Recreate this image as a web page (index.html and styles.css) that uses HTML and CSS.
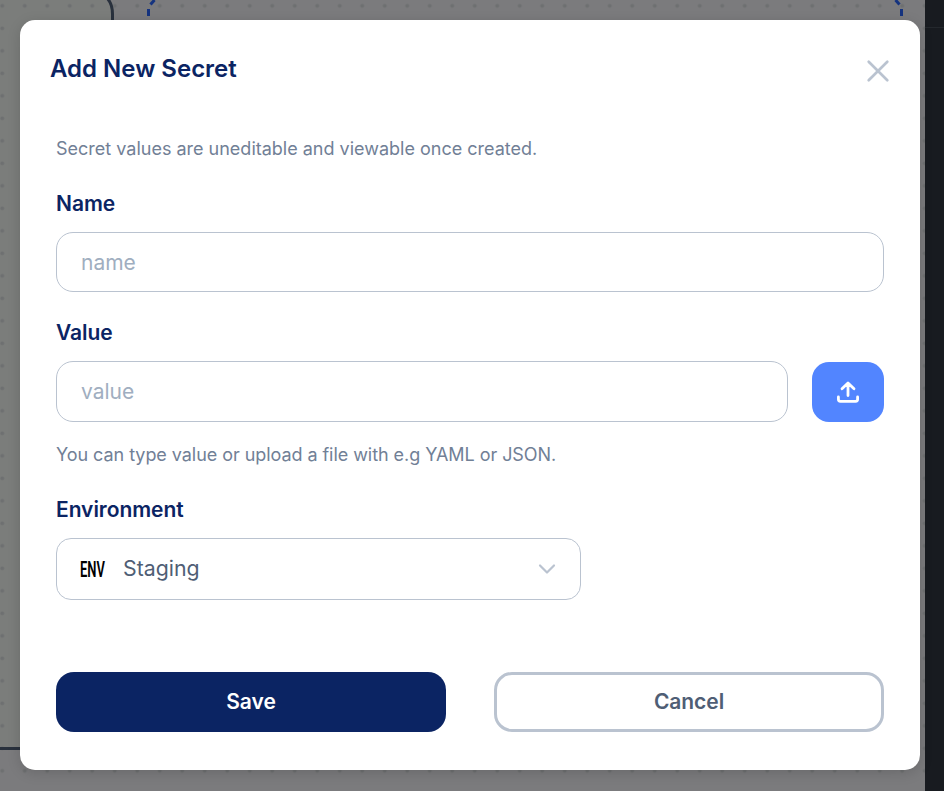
FILE: index.html
```
<!DOCTYPE html>
<html lang="en">
<head>
<meta charset="utf-8">
<title>Add New Secret</title>
<link rel="stylesheet" href="styles.css">
</head>
<body>
<svg class="canvas" width="944" height="791" aria-hidden="true">
  <defs>
    <pattern id="dots" width="22.5" height="22.5" patternUnits="userSpaceOnUse" x="-9" y="-5.4">
      <circle cx="11.25" cy="11.25" r="2" fill="#6e7071"/>
    </pattern>
  </defs>
  <rect width="944" height="791" fill="#7b7b7d"/>
  <path d="M0 0H106Q112 5 112 16V748H0Z" fill="#7b7d7b"/>
  <rect width="925" height="791" fill="url(#dots)"/>
  <path d="M106 -3Q112.500 3 112.500 14V748.500H0" fill="none" stroke="#29313d" stroke-width="3"/>
  <path d="M148.500 16V9M150.500 4.500L154.500 0M901.500 16V9M899.500 4.500L895.500 0" fill="none" stroke="#15337f" stroke-width="3"/>
  <rect x="925" width="19" height="791" fill="#181b20"/>
  <path d="M925 27.500H944" stroke="#24282d"/>
</svg>
<main class="modal" role="dialog" aria-labelledby="title">
  <header class="modal-header">
    <h1 id="title">Add New Secret</h1>
    <button class="close" aria-label="Close">
      <svg width="24" height="24" viewBox="0 0 24 24"><path d="M2.700 2.700L21.300 21.300M21.300 2.700L2.700 21.300"/></svg>
    </button>
  </header>
  <form class="form">
    <p class="note intro">Secret values are uneditable and viewable once created.</p>
    <label class="label" for="name">Name</label>
    <input class="input name-input" id="name" placeholder="name">
    <label class="label" for="value">Value</label>
    <div class="value-row">
      <input class="input" id="value" placeholder="value">
      <button class="upload" type="button" aria-label="Upload">
        <svg width="24" height="24" viewBox="0 0 24 24"><path d="M12 15.500V4M6 8.800L12 3L18 8.800M2.400 17V19.300Q2.400 21.300 4.400 21.300H19.600Q21.600 21.300 21.600 19.300V17"/></svg>
      </button>
    </div>
    <p class="note hint">You can type value or upload a file with e.g YAML or JSON.</p>
    <span class="label">Environment</span>
    <div class="select">
      <span class="env"><span>ENV</span></span>
      <span class="selected">Staging</span>
      <svg class="chevron" width="20" height="20" viewBox="0 0 20 20"><path d="M3 6.500L10 13.500L17 6.500"/></svg>
    </div>
    <div class="actions">
      <button class="button save" type="button">Save</button>
      <button class="button cancel" type="button">Cancel</button>
    </div>
  </form>
</main>
</body>
</html>
```
FILE: styles.css
```
* { box-sizing: border-box; }
body {
  margin: 0;
  height: 791px;
  overflow: hidden;
  padding: 20px;
  font-family: Inter, sans-serif;
}
button, input { font-family: inherit; }
button { cursor: pointer; padding: 0; }
.canvas { position: absolute; left: 0; top: 0; z-index: -1; }
.modal {
  width: 900px;
  height: 750px;
  padding: 30px;
  background: #fff;
  border-radius: 15px;
  box-shadow: 0 3px 14px rgba(0, 0, 0, .14);
}
.modal-header {
  display: flex;
  justify-content: space-between;
  height: 85px;
}
h1 {
  margin: 0;
  font-size: 24px;
  line-height: 38px;
  font-weight: 620;
  color: #0b2463;
}
.close {
  width: 24px;
  height: 24px;
  margin-top: 9px;
  border: 0;
  background: none;
}
.close svg, .upload svg, .chevron { display: block; fill: none; stroke-linecap: round; stroke-linejoin: round; }
.close svg { stroke: #bac3d0; stroke-width: 2.7; }
.form { padding: 0 6px; }
.note { margin: 0; font-size: 18px; line-height: 28px; color: #718096; }
.intro { margin-bottom: 24px; }
.label {
  display: block;
  height: 45px;
  font-size: 21px;
  line-height: 34px;
  font-weight: 620;
  letter-spacing: -.05px;
  color: #0b2463;
}
.input {
  display: block;
  width: 100%;
  height: 60px;
  padding: 0 24px;
  border: 1px solid #bac3d0;
  border-radius: 17px;
  font-size: 21px;
  background: #fff;
}
.input::placeholder { color: #a0aec0; opacity: 1; }
.name-input { margin-bottom: 24px; }
.value-row { display: flex; gap: 24px; height: 61px; margin-bottom: 19px; }
.value-row .input { flex: 1; height: 61px; }
.upload {
  display: grid;
  place-items: center;
  width: 72px;
  height: 60px;
  margin-top: 1px;
  border: 0;
  border-radius: 17px;
  background: #5285ff;
}
.upload svg { stroke: #fff; stroke-width: 2.8; }
.hint { margin-bottom: 24px; letter-spacing: -.055px; }
.select {
  display: flex;
  align-items: center;
  width: 525px;
  height: 62px;
  margin-bottom: 72px;
  padding: 0 23px;
  border: 1px solid #bac3d0;
  border-radius: 15px;
}
.env { width: 43px; padding-top: 2px; color: #000; font: 600 22px/28px Roboto, sans-serif; }
.env span { display: inline-block; transform: scaleX(.59); transform-origin: left; }
.selected { flex: 1; padding-bottom: 2px; font-size: 21.3px; color: #4f5e75; }
.chevron { stroke: #bac3d0; stroke-width: 2.2; }
.actions { display: grid; grid-template-columns: 1fr 1fr; gap: 48px; }
.button { height: 60px; border-radius: 18px; font-size: 21px; font-weight: 620; letter-spacing: -.05px; }
.save { padding-bottom: 2px; border: 0; background: #0b2463; color: #fff; }
.cancel { padding-bottom: 2px; border: 3px solid #bac3d0; background: #fff; color: #4f5e75; }
```
